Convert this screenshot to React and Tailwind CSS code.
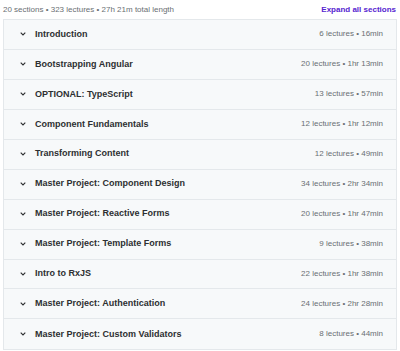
import React from 'react'

const sections = [
  ['Introduction', '6 lectures • 16min'],
  ['Bootstrapping Angular', '20 lectures • 1hr 13min'],
  ['OPTIONAL: TypeScript', '13 lectures • 57min'],
  ['Component Fundamentals', '12 lectures • 1hr 12min'],
  ['Transforming Content', '12 lectures • 49min'],
  ['Master Project: Component Design', '34 lectures • 2hr 34min'],
  ['Master Project: Reactive Forms', '20 lectures • 1hr 47min'],
  ['Master Project: Template Forms', '9 lectures • 38min'],
  ['Intro to RxJS', '22 lectures • 1hr 38min'],
  ['Master Project: Authentication', '24 lectures • 2hr 28min'],
  ['Master Project: Custom Validators', '8 lectures • 44min']
]

const Chevron = () => (
  <svg width="6" height="4" viewBox="0 0 6 4" className="shrink-0">
    <path d="M0.7 0.7 L3 3 L5.3 0.7" fill="none" stroke="#2d2f31" strokeWidth="1.1" />
  </svg>
)

const App = () => {
  return (
    <div className="w-[400px] h-[351px] bg-white overflow-hidden px-[3px] font-['Liberation_Sans',sans-serif]">
      {/* Header */}
      <div className="h-[19px] flex items-center justify-between">
        <span className="text-[8px] text-[#6a6f73]">20 sections • 323 lectures • 27h 21m total length</span>
        <button className="text-[8px] font-bold text-[#5624d0] pr-[1px]">Expand all sections</button>
      </div>

      {/* Sections */}
      <div className="border border-[#e4e8eb]">
        {sections.map(([title, meta], i) => (
          <div
            key={title}
            className={`h-[29.95px] flex items-center justify-between bg-[#f7f9fa] pl-[16px] pr-[13px] ${
              i < sections.length - 1 ? 'border-b border-[#e4e8eb]' : ''
            }`}
          >
            <div className="flex items-center gap-[9px]">
              <Chevron />
              <span className="text-[9px] font-bold text-[#2d2f31]">{title}</span>
            </div>
            <span className="text-[8px] text-[#6a6f73]">{meta}</span>
          </div>
        ))}
      </div>
    </div>
  )
}

export default App
